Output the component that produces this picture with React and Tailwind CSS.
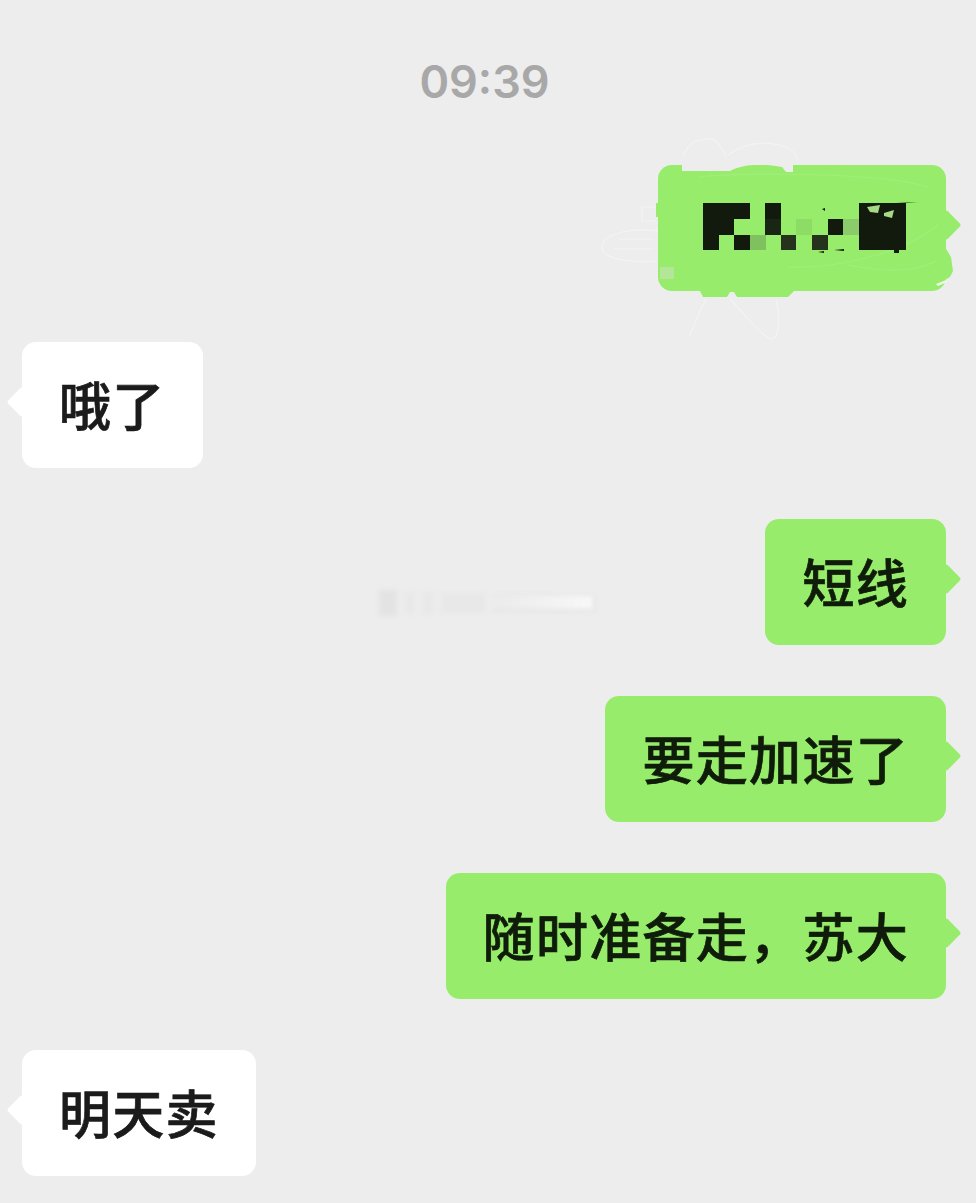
import React from 'react';

const FONT = '"Noto Sans CJK SC", "Noto Sans", sans-serif';

function Bubble({ text, mine, children }) {
    return (
        <div
            className={`relative h-[126px] rounded-[14px] px-[37px] pb-[2px] flex items-center text-[52px] tracking-[1.3px] font-medium [-webkit-text-stroke:0.7px] leading-none whitespace-nowrap ${
                mine ? 'bg-[#98ec6c] text-[#0f1c0a]' : 'bg-white text-[#1b1b1b]'
            }`}
        >
            <span
                className={`absolute top-[49px] w-[22px] h-[22px] rotate-45 rounded-[3px] ${
                    mine ? '-right-[11px] bg-[#98ec6c]' : '-left-[11px] bg-white'
                }`}
            />
            <span className="relative">{text}</span>
            {children}
        </div>
    );
}

// the painted-over first message: blobs, scribbles and mosaic, coords relative to the bubble
function Redaction() {
    const g = '#98ec6c';
    return (
        <svg className="absolute left-0 top-0 overflow-visible" width="288" height="126" viewBox="0 0 288 126">
            {/* scribbles around the bubble */}
            <g fill="none" stroke="#f3f3f3" strokeWidth="1.2">
                <path d="M25 -8 C28 -18 36 -26 46 -25 C56 -30 62 -20 68 -10" />
                <path d="M70 -10 C90 -24 110 -24 128 -18 C136 -14 138 -10 140 -5" />
                <path d="M-2 56 L-16 56 L-16 42 L-2 42 M0 66 C-30 62 -56 70 -56 82 C-56 94 -28 98 -2 96 M-40 74 L-4 74 M-44 84 L-4 84" />
                <path d="M48 134 C42 146 36 160 32 170 M72 134 C88 150 100 168 112 174 C122 176 122 150 118 134" />
            </g>
            <g fill="none" stroke="#a0ee7a" strokeWidth="1.2">
                <path d="M40 12 C70 8 220 6 270 22 M280 60 C250 84 190 104 130 102 M190 100 C230 108 260 106 278 96" />
            </g>
            {/* green paint spilling past the edges */}
            <path d="M42 126 L45 132 L69 132 L72 127 L76 127 L79 132 L130 132 L136 126 Z" fill={g} />
            <path d="M287 82 L293 92 L295 106 L292 112 L285 116 Z" fill={g} />
            <rect x="-2" y="38" width="3" height="14" fill={g} />
            {/* notch cut out of the top edge */}
            <path d="M24 -1 L24 6 L72 6 C84 -1 106 -2 124 2 L128 7 L135 7 L135 -1 Z" fill="#ededed" />
            <rect x="2" y="102" width="14" height="12" fill="#b4e69a" />
            <path d="M278 119 L288 115 L289 117 L280 121 Z" fill="#eef7e8" />
            {/* mosaic */}
            <g fill="#121a0e">
                <rect x="45" y="38" width="47" height="16" />
                <rect x="45" y="54" width="31" height="16" />
                <rect x="45" y="70" width="16" height="15" />
                <rect x="76" y="70" width="16" height="15" />
                <rect x="107" y="38" width="16" height="16" />
                <rect x="107" y="54" width="16" height="16" fill="#1a2614" />
                <rect x="123" y="70" width="15" height="15" fill="#25331d" />
                <rect x="154" y="70" width="16" height="15" fill="#25331d" />
                <rect x="170" y="54" width="15" height="16" />
                <rect x="201" y="38" width="47" height="47" />
                <rect x="236" y="85" width="5" height="3" />
                <path d="M238 38 L260 37 L238 39 Z M164 44 L167 43 L167 46 Z M138 68 L144 64 L139 69 Z M160 87 L166 86 L166 88 Z M176 85 L186 84 L186 86 Z" />
            </g>
            <rect x="92" y="70" width="16" height="15" fill="#7fc15f" />
            <rect x="138" y="54" width="16" height="16" fill="#8cdc65" />
            <rect x="185" y="54" width="16" height="16" fill="#8ccb6a" />
            <path d="M209 42 L222 40 L220 48 L212 47 Z M226 48 L236 45 L234 53 L226 51 Z" fill="#a6da84" />
        </svg>
    );
}

export default function App() {
    return (
        <div className="w-[976px] h-[1203px] overflow-hidden bg-[#ededed] flex flex-col" style={{ fontFamily: FONT }}>
            <div
                className="h-[165px] pb-[2px] pr-[7px] flex items-center justify-center text-[45px] font-semibold text-[#a8a8a8]"
                style={{ fontFamily: 'Inter, sans-serif' }}
            >
                09:39
            </div>

            <div className="flex flex-col gap-[51px] pl-[22px] pr-[30px]">
                <div className="self-end">
                    <Bubble mine text={<span className="inline-block w-[214px]" />}>
                        <Redaction />
                    </Bubble>
                </div>
                <div className="self-start">
                    <Bubble text="哦了" />
                </div>
                <div className="relative self-end">
                    <Bubble mine text="短线" />
                    {/* blurred-out recall notice */}
                    <div className="absolute top-[71px] -left-[386px] w-[216px] h-[26px] flex items-center gap-[8px] blur-[2px]">
                        <span className="w-[18px] h-[26px] bg-[#e3e3e3]" />
                        <span className="w-[10px] h-[22px] bg-[#e8e8e8]" />
                        <span className="w-[10px] h-[22px] bg-[#e8e8e8]" />
                        <span className="w-[44px] h-[20px] bg-[#e8e8e8]" />
                        <span className="flex-1 h-[16px] bg-gradient-to-r from-[#ebebeb] to-[#f8f8f8] border-t border-b-2 border-r-2 border-[#e2e2e2]" />
                    </div>
                </div>
                <div className="self-end">
                    <Bubble mine text="要走加速了" />
                </div>
                <div className="self-end">
                    <Bubble mine text="随时准备走，苏大" />
                </div>
                <div className="self-start">
                    <Bubble text="明天卖" />
                </div>
            </div>
        </div>
    );
}
